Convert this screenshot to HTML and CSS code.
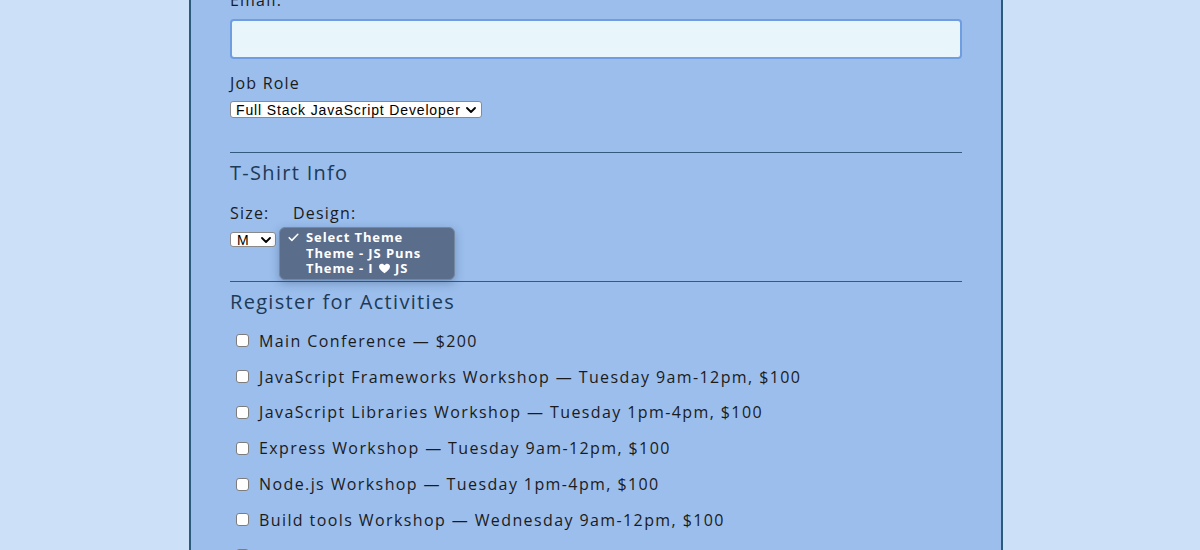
FILE: index.html
```html
<!DOCTYPE html>
<html lang="en">
<head>
<meta charset="utf-8">
<title>Registration</title>
<link rel="stylesheet" href="styles.css">
</head>
<body>
<div class="card">
  <label class="lbl lbl-email" for="mail">Email:</label>
  <input class="text-input" id="mail" type="email">

  <label class="lbl lbl-job" for="title">Job Role</label>
  <div class="sel sel-role">
    <span>Full Stack JavaScript Developer</span>
    <svg class="chev" viewBox="0 0 10 6" width="10" height="6"><path d="M1 1l4 4 4-4" fill="none" stroke="#000" stroke-width="1.8" stroke-linecap="round" stroke-linejoin="round"/></svg>
  </div>

  <hr class="rule rule-1">
  <h2 class="heading">T-Shirt Info</h2>

  <div class="shirt">
    <div class="field">
      <label class="lbl">Size:</label>
      <div class="sel sel-size">
        <span>M</span>
        <svg class="chev" viewBox="0 0 10 6" width="10" height="6"><path d="M1 1l4 4 4-4" fill="none" stroke="#000" stroke-width="1.8" stroke-linecap="round" stroke-linejoin="round"/></svg>
      </div>
    </div>
    <div class="field field-design">
      <label class="lbl">Design:</label>
      <div class="design-slot">
        <ul class="popup">
          <li class="opt opt-checked"><svg class="check" viewBox="0 0 12 10" width="11" height="9"><path d="M1.2 5.2l3 3L10.8 1.4" fill="none" stroke="#fff" stroke-width="1.7" stroke-linecap="round" stroke-linejoin="round"/></svg>Select Theme</li>
          <li class="opt">Theme - JS Puns</li>
          <li class="opt">Theme - I <svg class="heart" viewBox="0 0 16 14" width="13" height="11"><path d="M8 13.2C3.6 10 1 7.6 1 4.6 1 2.6 2.6 1 4.6 1 6 1 7.3 1.8 8 3 8.7 1.8 10 1 11.4 1 13.4 1 15 2.6 15 4.6 15 7.6 12.4 10 8 13.2z" fill="#fff"/></svg> JS</li>
        </ul>
      </div>
    </div>
  </div>

  <hr class="rule rule-2">
  <h2 class="heading">Register for Activities</h2>

  <div class="acts">
    <label class="act"><input type="checkbox" class="cb">Main Conference — $200</label>
    <label class="act"><input type="checkbox" class="cb">JavaScript Frameworks Workshop — Tuesday 9am-12pm, $100</label>
    <label class="act"><input type="checkbox" class="cb">JavaScript Libraries Workshop — Tuesday 1pm-4pm, $100</label>
    <label class="act"><input type="checkbox" class="cb">Express Workshop — Tuesday 9am-12pm, $100</label>
    <label class="act"><input type="checkbox" class="cb">Node.js Workshop — Tuesday 1pm-4pm, $100</label>
    <label class="act"><input type="checkbox" class="cb">Build tools Workshop — Wednesday 9am-12pm, $100</label>
    <label class="act"><input type="checkbox" class="cb">npm Workshop — Wednesday 1pm-4pm, $100</label>
  </div>
</div>
</body>
</html>
```

FILE: styles.css
```css
html, body {
  margin: 0;
  padding: 0;
  height: 100%;
  overflow: hidden;
}
body {
  background: #cce0f8;
  font-family: "Open Sans", "Noto Sans", sans-serif;
  color: #1b1b1b;
}
.card {
  box-sizing: border-box;
  width: 814px;
  min-height: 100%;
  margin: 0 0 0 189px;
  padding: 0 39px 40px 39px;
  background: #9bbeed;
  border-left: 2px solid #2c5a7c;
  border-right: 2px solid #2c5a7c;
  display: flex;
  flex-direction: column;
  align-items: flex-start;
}
.lbl {
  display: block;
  font-size: 16px;
  line-height: 18px;
  letter-spacing: 1.2px;
  color: #1b1b1b;
}
.lbl-email {
  margin-top: -9px;
}
.text-input {
  box-sizing: border-box;
  width: 100%;
  height: 40px;
  margin: 10px 0 0 0;
  background: #e8f5fa;
  border: 2px solid #6e9de0;
  border-radius: 4px;
}
.lbl-job {
  margin-top: 15px;
}
.sel {
  box-sizing: border-box;
  display: flex;
  align-items: center;
  justify-content: space-between;
  background: #fff;
  border: 1px solid #8a8a8a;
  border-radius: 3px;
  font-family: "Liberation Sans", Arial, sans-serif;
  color: #000;
  white-space: nowrap;
}
.sel-role {
  width: 252px;
  height: 17px;
  margin-top: 9px;
  padding: 0 5px 0 5px;
  font-size: 14px;
  letter-spacing: 0.85px;
}
.sel-size {
  width: 46px;
  height: 15px;
  margin-top: 10px;
  padding: 0 4px 0 6px;
  font-size: 14px;
}
.chev {
  flex: none;
}
.rule {
  align-self: stretch;
  height: 0;
  margin: 0;
  border: 0;
  border-top: 1px solid #325b7d;
}
.rule-1 {
  margin-top: 34px;
}
.rule-2 {
  margin-top: 34px;
}
.heading {
  margin: 8px 0 0 0;
  font-size: 20px;
  line-height: 24px;
  font-weight: 400;
  letter-spacing: 1.3px;
  color: #1d3a57;
}
.shirt {
  display: flex;
  gap: 17px;
  margin-top: 19px;
}
.field {
  display: flex;
  flex-direction: column;
  align-items: flex-start;
}
.design-slot {
  position: relative;
  width: 1px;
  height: 15px;
  margin-top: 10px;
}
.popup {
  position: absolute;
  left: -14px;
  top: -5px;
  box-sizing: border-box;
  width: 176px;
  height: 53px;
  margin: 0;
  padding: 2px 0 0 26px;
  list-style: none;
  background: #5a6d8b;
  border: 1px solid #7487a3;
  border-radius: 6px;
  box-shadow: 0 3px 10px rgba(40, 60, 90, 0.35);
  font-family: "Open Sans", "Liberation Sans", sans-serif;
  font-weight: 700;
  font-size: 13px;
  letter-spacing: 0.9px;
  color: #fff;
  z-index: 2;
}
.opt {
  position: relative;
  height: 15.5px;
  line-height: 15.5px;
  white-space: nowrap;
}
.check {
  position: absolute;
  left: -18px;
  top: 3px;
}
.heart {
  display: inline-block;
  vertical-align: -1px;
}
.acts {
  display: flex;
  flex-direction: column;
  margin-top: 9px;
}
.act {
  display: flex;
  align-items: center;
  height: 35.8px;
  font-size: 16px;
  letter-spacing: 1.4px;
  color: #1b1b1b;
  white-space: nowrap;
}
.cb {
  appearance: none;
  -webkit-appearance: none;
  box-sizing: border-box;
  width: 13px;
  height: 13px;
  margin: 0 10px 0 6px;
  background: #fff;
  border: 1px solid #7d7d7d;
  border-radius: 3px;
}
```
